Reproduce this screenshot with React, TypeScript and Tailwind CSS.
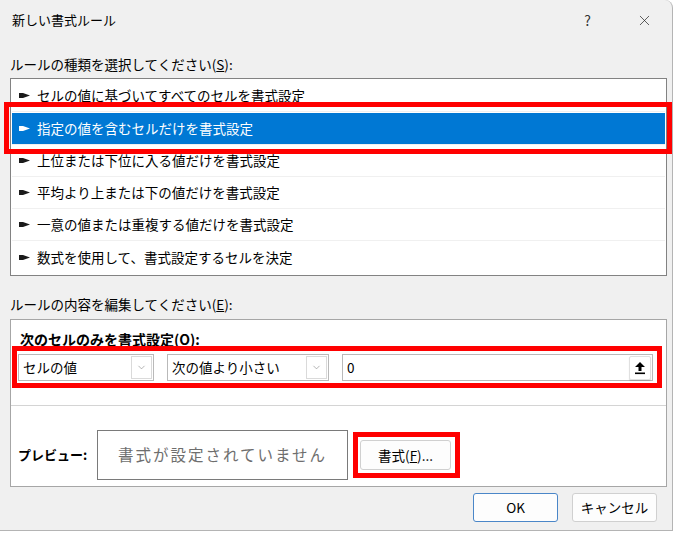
import { ChevronDown, X } from 'lucide-react';

const ruleTypes = [
  'セルの値に基づいてすべてのセルを書式設定',
  '指定の値を含むセルだけを書式設定',
  '上位または下位に入る値だけを書式設定',
  '平均より上または下の値だけを書式設定',
  '一意の値または重複する値だけを書式設定',
  '数式を使用して、書式設定するセルを決定',
];

const SELECTED = 1;

function Pointer({ light }: { light?: boolean }) {
  return (
    <svg width="11" height="7" viewBox="0 0 11 7" className="shrink-0">
      <polygon points="0,1 4,1 11,3.5 4,6 0,6" fill={light ? '#ffffff' : '#1a1a1a'} />
    </svg>
  );
}

function Dropdown({ label, width }: { label: string; width: string }) {
  return (
    <div className={`flex h-[27px] items-center justify-between border border-[#b9b9b9] bg-white pl-[4px] pr-[1px] ${width}`}>
      <span className="text-[13.5px] text-black">{label}</span>
      <span className="flex h-[23px] w-[21px] items-center justify-center border border-[#dadada] bg-white">
        <ChevronDown size={11} strokeWidth={1.2} className="text-[#777]" />
      </span>
    </div>
  );
}

export default function App() {
  return (
    <div className="h-[533px] w-[676px] bg-white font-['Noto_Sans_CJK_JP',sans-serif] text-black">
      <div className="flex h-[531px] w-[673px] flex-col rounded-tr-[8px] border-r border-b border-[#b4b4b4] bg-[#f0f0f0]">
        {/* title bar */}
        <div className="flex h-[40px] items-center pl-[12px]">
          <span className="text-[13px]">新しい書式ルール</span>
          <span className="ml-auto mr-[45px] text-[14px] text-[#333]">?</span>
          <X size={17} strokeWidth={1} className="mr-[19px] text-[#222]" />
        </div>

        <div className="mt-[15px] pl-[10px] text-[13.5px] leading-[18px]">
          ルールの種類を選択してください(<span className="underline">S</span>):
        </div>

        {/* rule type list */}
        <div className="ml-[10px] mt-[5px] w-[657px] border border-[#828282] bg-white px-px pt-px pb-[2px]">
          {ruleTypes.map((text, i) => {
            const selected = i === SELECTED;
            return (
              <div key={text} className="relative h-[32px] border-b border-[#f0f0f0] last:border-b-0">
                <div
                  className={`flex h-full items-center gap-[7px] pl-[7px] text-[13.5px] ${
                    selected ? 'my-px h-[30px] bg-[#0078d4] text-white' : ''
                  }`}
                >
                  <Pointer light={selected} />
                  <span>{text}</span>
                </div>
                {selected && (
                  <div className="absolute -top-[11px] -bottom-[10px] -left-[8px] -right-[7px] border-[5px] border-[#ff0000]" />
                )}
              </div>
            );
          })}
        </div>

        <div className="mt-[19px] pl-[10px] text-[13.5px] leading-[18px]">
          ルールの内容を編集してください(<span className="underline">E</span>):
        </div>

        {/* rule description panel */}
        <div className="ml-[10px] mt-[6px] w-[657px] border border-[#a6a6a6] bg-white">
          <div className="pl-[9px] pt-[10px] text-[14px] font-bold leading-[18px]">
            次のセルのみを書式設定(<span className="underline">O</span>):
          </div>
          <div className="relative ml-[7px] mt-[6px] flex w-[635px] gap-[13px]">
            <Dropdown label="セルの値" width="w-[136px]" />
            <Dropdown label="次の値より小さい" width="w-[162px]" />
            <div className="flex h-[27px] flex-1 items-center justify-between border border-[#b9b9b9] bg-white pl-[4px] pr-px">
              <span className="text-[13.5px]">0</span>
              <span className="flex h-[24px] w-[22px] items-center justify-center rounded-[2px] border border-[#e0e0e0] bg-white shadow-[0_1px_1px_rgba(0,0,0,0.15)]">
                <svg width="12" height="14" viewBox="0 0 12 14">
                  <path d="M6 1 L11 6 L7.5 6 L7.5 10 L4.5 10 L4.5 6 L1 6 Z" fill="#000" />
                  <rect x="1" y="11.5" width="10" height="1.6" fill="#000" />
                </svg>
              </span>
            </div>
            <div className="absolute -top-[8px] -bottom-[7px] -left-[6px] -right-[9px] border-[5px] border-[#ff0000]" />
          </div>

          <div className="mt-[24px] border-t border-[#d4d4d4]" />

          <div className="flex items-center pb-[6px] pl-[7px] pt-[24px]">
            <span className="w-[79px] text-[13px] font-bold">プレビュー:</span>
            <div className="flex h-[50px] w-[251px] items-center justify-center border border-[#7a7a7a] bg-white text-[15.5px] tracking-[2px] text-[#6e6e6e]">
              書式が設定されていません
            </div>
            <div className="relative ml-[12px]">
              <button
                type="button"
                className="flex h-[30px] w-[91px] items-center justify-center rounded-[3px] border border-[#d0d0d0] bg-[#fdfdfd] text-[13.5px]"
              >
                書式(<span className="underline">F</span>)...
              </button>
              <div className="absolute -top-[8px] -bottom-[8px] -left-[7px] -right-[9px] border-[5px] border-[#ff0000]" />
            </div>
          </div>
        </div>

        {/* dialog buttons */}
        <div className="mt-[6px] flex justify-end gap-[14px] pr-[15px]">
          <button
            type="button"
            className="h-[29px] w-[85px] rounded-[3px] border border-[#4a86c8] bg-[#fdfdfd] text-[13.5px]"
          >
            OK
          </button>
          <button
            type="button"
            className="h-[29px] w-[85px] rounded-[3px] border border-[#d0d0d0] bg-[#fdfdfd] text-[13.5px]"
          >
            キャンセル
          </button>
        </div>
      </div>
    </div>
  );
}
